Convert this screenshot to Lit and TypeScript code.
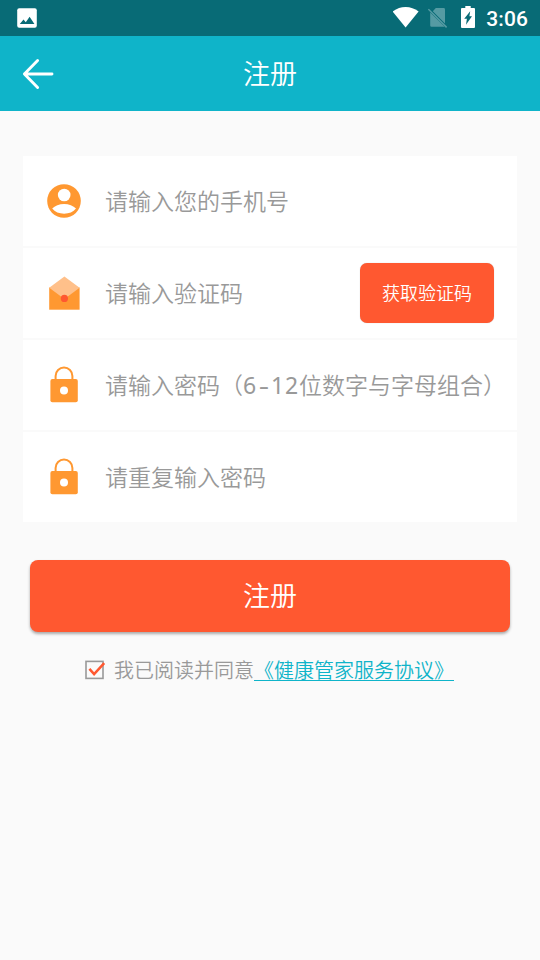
import { LitElement, html, css, svg } from "lit";
import { customElement, property } from "lit/decorators.js";

const userIcon = svg`<svg width="36" height="36" viewBox="0 0 36 36">
  <circle cx="18" cy="18" r="16.8" fill="#ff9831"/>
  <circle cx="18.2" cy="12" r="6.3" fill="#fff"/>
  <path d="M6.2 25.6C8.8 22.6 13.4 20.9 18.1 20.9s9.3 1.7 11.9 4.7c-2.7 3.4-7 5.2-11.9 5.2s-9.2-1.8-11.9-5.2z" fill="#fff"/>
</svg>`;

const mailIcon = svg`<svg width="36" height="36" viewBox="0 0 36 36">
  <path d="M3.2 12.5h30.4V34.7H3.2z" fill="#ff9831"/>
  <path d="M3.2 12.8L18.4 1.6l15.2 11.2L18.4 24z" fill="#ffc08a"/>
  <circle cx="18.4" cy="23.4" r="3.6" fill="#ff5830"/>
</svg>`;

const lockIcon = svg`<svg width="36" height="38" viewBox="0 0 36 38">
  <path d="M9.6 14V9.9a8.4 8.4 0 0 1 16.8 0V14" fill="none" stroke="#ff9831" stroke-width="2"/>
  <rect x="4.4" y="12.9" width="27.4" height="23.4" rx="2" fill="#ff9831"/>
  <circle cx="18" cy="24.6" r="4" fill="#fff"/>
</svg>`;

@customElement("form-row")
export class FormRow extends LitElement {
  @property() kind = "user";

  static styles = css`
    :host { display: flex; align-items: center; height: 90px; background: #fff; }
    .icon { width: 36px; margin-left: 23px; margin-right: 23px; display: flex; }
    .text { flex: 1; white-space: nowrap; font-size: 23px; line-height: 34px; color: #999; margin-bottom: 2px; }
  `;

  render() {
    const icon = this.kind === "user" ? userIcon : this.kind === "mail" ? mailIcon : lockIcon;
    return html`<div class="icon">${icon}</div><div class="text"><slot></slot></div><slot name="action"></slot>`;
  }
}

@customElement("app-root")
export class AppRoot extends LitElement {
  static styles = css`
    :host {
      display: flex; flex-direction: column; height: 960px; background: #fafafa;
      font-family: "Noto Sans CJK SC", sans-serif; font-weight: 350; overflow: hidden;
    }
    .status { height: 36px; flex: none; background: #086b76; display: flex; align-items: center; }
    .status svg { display: block; flex: none; margin-bottom: 2px; }
    .status .photo { margin: 0 auto 0 17px; }
    .status .sim { margin: 0 0 0 9px; }
    .status .battery { margin-left: 12px; }
    .time { font: 500 21px/36px Roboto, sans-serif; color: #fff; margin: 2px 12px 0 11px; letter-spacing: 0.1px; }
    .header {
      height: 75px; flex: none; background: #0fb4c9; display: grid;
      grid-template-columns: 76px 1fr 76px; align-items: center;
    }
    .back { margin-left: 22px; display: block; }
    .title { color: #fff; font-size: 27px; line-height: 40px; text-align: center; margin-bottom: 2px; }
    .card { margin: 45px 23px 0; display: flex; flex-direction: column; gap: 2px; }
    .code {
      width: 134px; height: 60px; margin-right: 23px; border-radius: 7px; background: #ff5830;
      color: #fff; font-size: 18px; display: flex; align-items: center; justify-content: center;
      box-shadow: 0 0 1px rgba(0, 0, 0, 0.25); box-sizing: border-box; padding-bottom: 3px;
    }
    .num { font-family: "Noto Sans", sans-serif; font-weight: 400; letter-spacing: 0.8px; }
    .dash { display: inline-block; width: 14px; text-align: center; letter-spacing: 0; transform: scaleX(1.4); }
    .submit {
      margin: 38px 30px 0; height: 72px; border-radius: 8px; background: #ff5830; color: #fff;
      font-size: 27px; display: flex; align-items: center; justify-content: center;
      box-shadow: 0 2px 3px rgba(0, 0, 0, 0.32); box-sizing: border-box; padding-bottom: 4px;
    }
    .agree {
      margin: 23px 0 0 84px; display: flex; align-items: center; font-size: 20px; line-height: 30px;
      color: #999; white-space: nowrap;
    }
    .check { margin-right: 8px; display: block; }
    .link { color: #0fb4c9; text-decoration: underline; text-decoration-thickness: 1px; text-underline-offset: 2px; }
  `;

  render() {
    return html`
      <div class="status">
        <svg class="photo" width="20" height="20" viewBox="0 0 20 20">
          <rect x="0.2" y="0.2" width="19.6" height="19.6" rx="2" fill="#fff"/>
          <path d="M2.8 16l3.7-4.6 2.3 2.9 3.8-5.6 4.8 7.3z" fill="#086b76"/>
        </svg>
        <svg width="26" height="22" viewBox="0 0 26 22">
          <path d="M-.4 5.6C3.5 2.6 7.8 1 12.6 1s9.1 1.6 13 4.6L12.6 21.6z" fill="#fff"/>
        </svg>
        <svg class="sim" width="21" height="22" viewBox="0 0 21 22">
          <path d="M7.8 1H15.6a1.4 1.4 0 0 1 1.4 1.4v14L4.8 4.2zM2.2 5.4L16.4 19.6a1.4 1.4 0 0 1-.8.2H3.6a1.4 1.4 0 0 1-1.4-1.4z" fill="#559ba3"/>
          <path d="M.4 2.2L18.6 20.4" stroke="#559ba3" stroke-width="1.5"/>
        </svg>
        <svg class="battery" width="14" height="22" viewBox="0 0 14 22">
          <path d="M4.3 0h5.4v2H13a1 1 0 0 1 1 1v18a1 1 0 0 1-1 1H1a1 1 0 0 1-1-1V3a1 1 0 0 1 1-1h3.3z" fill="#fff"/>
          <path d="M9.2 5.2L8.4 10.2h2.6L5 18.8l.9-6H3.2z" fill="#086b76"/>
        </svg>
        <span class="time">3:06</span>
      </div>
      <div class="header">
        <svg class="back" width="32" height="32" viewBox="0 0 32 32">
          <path d="M15.6 2.6L2.4 16l13.2 13.4M2.4 16H30" fill="none" stroke="#fff" stroke-width="2.9" stroke-linecap="round" stroke-linejoin="round"/>
        </svg>
        <div class="title">注册</div>
      </div>
      <div class="card">
        <form-row kind="user">请输入您的手机号</form-row>
        <form-row kind="mail">请输入验证码<div slot="action" class="code">获取验证码</div></form-row>
        <form-row kind="lock">请输入密码（<span class="num">6<span class="dash">-</span>12</span>位数字与字母组合）</form-row>
        <form-row kind="lock">请重复输入密码</form-row>
      </div>
      <div class="submit">注册</div>
      <div class="agree">
        <svg class="check" width="22" height="22" viewBox="0 0 22 22">
          <rect x="2" y="2.4" width="17" height="17" fill="none" stroke="#999" stroke-width="1.6"/>
          <path d="M5.4 9.9l4.7 5.2L20.2 4.2" fill="none" stroke="#ff5830" stroke-width="2.5"/>
        </svg>
        <span>我已阅读并同意</span><span class="link">《健康管家服务协议》</span>
      </div>
    `;
  }
}
